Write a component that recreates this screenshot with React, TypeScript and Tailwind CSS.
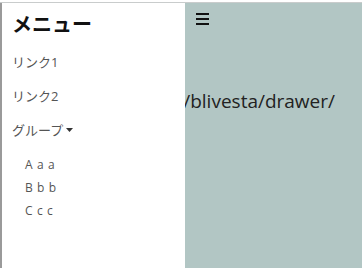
import React from "react";

export default function App() {
  return (
    <div
      className="relative w-[362px] h-[268px] overflow-hidden bg-white"
      style={{ fontFamily: '"Open Sans", "Noto Sans CJK JP", sans-serif' }}
    >
      <div className="absolute inset-0 top-[2px] border-t border-[#c9cccc] bg-[#b2c6c4]">
        {/* main content */}
        <div className="flex flex-col h-full">
          <div className="pl-[196px] pt-[8px]">
            <button className="flex flex-col gap-[3px] py-[2px]">
              <span className="block w-[13px] h-[2px] bg-[#111]" />
              <span className="block w-[13px] h-[2px] bg-[#111]" />
              <span className="block w-[13px] h-[2px] bg-[#111]" />
            </button>
          </div>
          <div className="flex justify-end pr-[27px] mt-[65px]">
            <span className="whitespace-nowrap text-[19px] text-[#222] leading-none">
              https://github.com/blivesta/drawer/
            </span>
          </div>
        </div>
      </div>

      {/* drawer */}
      <nav className="absolute left-0 top-[3px] bottom-0 w-[185px] bg-white border-l-[2px] border-[#9a9a9a]">
        <h1 className="pl-[10px] pt-[12px] text-[20px] font-bold text-[#111] leading-none">メニュー</h1>
        <ul className="mt-[10px] text-[13px] text-[#555]">
          <li className="pl-[10px] py-[8px] leading-[18px]">リンク1</li>
          <li className="pl-[10px] py-[8px] leading-[18px]">リンク2</li>
          <li className="pl-[10px] py-[8px] leading-[18px] flex items-center gap-[3px]">
            グループ
            <svg width="7" height="4" viewBox="0 0 7 4">
              <path d="M0 0h7L3.5 4z" fill="#333" />
            </svg>
          </li>
        </ul>
        <ul className="mt-[9px] pl-[23px] text-[12px] leading-[17px] tracking-[0.6px] text-[#555] flex flex-col gap-[6px]">
          <li>A a a</li>
          <li>B b b</li>
          <li>C c c</li>
        </ul>
      </nav>
    </div>
  );
}
